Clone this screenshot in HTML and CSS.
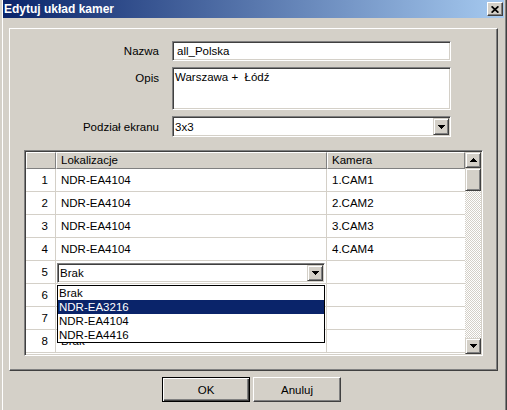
FILE: index.html
```html
<!DOCTYPE html>
<html lang="pl">
<head>
<meta charset="utf-8">
<title>Edytuj układ kamer</title>
<link rel="stylesheet" href="styles.css">
</head>
<body>
<div class="window">
  <div class="titlebar">
    <span class="title">Edytuj układ kamer</span>
    <div class="close-btn">
      <svg width="8" height="7" viewBox="0 0 8 7"><path d="M0.6 0.3 L7.4 6.7 M7.4 0.3 L0.6 6.7" stroke="#000" stroke-width="1.7" fill="none"/></svg>
    </div>
  </div>

  <div class="panel">
    <div class="form">
      <div class="lbl">Nazwa</div>
      <div class="field">all_Polska</div>
      <div class="lbl lbl-top">Opis</div>
      <div class="field area">Warszawa +  Łódź</div>
      <div class="lbl">Podział ekranu</div>
      <div class="field select">
        <span>3x3</span>
        <span class="drop-btn"><svg width="7" height="4" viewBox="0 0 7 4"><path d="M0 0h7v1h-1v1h-1v1h-1v1h-1v-1h-1v-1h-1v-1h-1z" fill="#000"/></svg></span>
      </div>
    </div>

    <div class="grid-frame">
      <div class="grid">
        <div class="hd"></div>
        <div class="hd">Lokalizacje</div>
        <div class="hd hd-last">Kamera</div>

        <div class="c num">1</div><div class="c">NDR-EA4104</div><div class="c last">1.CAM1</div>
        <div class="c num">2</div><div class="c">NDR-EA4104</div><div class="c last">2.CAM2</div>
        <div class="c num">3</div><div class="c">NDR-EA4104</div><div class="c last">3.CAM3</div>
        <div class="c num">4</div><div class="c">NDR-EA4104</div><div class="c last">4.CAM4</div>
        <div class="c num">5</div>
        <div class="c edit">
          <div class="combo">
            <div class="field select cell-select">
              <span>Brak</span>
              <span class="drop-btn small"><svg width="7" height="4" viewBox="0 0 7 4"><path d="M0 0h7v1h-1v1h-1v1h-1v1h-1v-1h-1v-1h-1v-1h-1z" fill="#000"/></svg></span>
            </div>
            <div class="dd-list">
              <div class="dd-item">Brak</div>
              <div class="dd-item sel">NDR-EA3216</div>
              <div class="dd-item">NDR-EA4104</div>
              <div class="dd-item">NDR-EA4416</div>
            </div>
          </div>
        </div>
        <div class="c last"></div>
        <div class="c num">6</div><div class="c"></div><div class="c last"></div>
        <div class="c num">7</div><div class="c"></div><div class="c last"></div>
        <div class="c num">8</div><div class="c">Brak</div><div class="c last"></div>
      </div>
      <div class="vscroll">
        <div class="sb-btn"><svg width="7" height="4" viewBox="0 0 7 4"><path d="M0 4h7v-1h-1v-1h-1v-1h-1v-1h-1v1h-1v1h-1v1h-1z" fill="#000"/></svg></div>
        <div class="sb-btn sb-thumb"></div>
        <div class="sb-track"></div>
        <div class="sb-btn"><svg width="7" height="4" viewBox="0 0 7 4"><path d="M0 0h7v1h-1v1h-1v1h-1v1h-1v-1h-1v-1h-1v-1h-1z" fill="#000"/></svg></div>
      </div>
    </div>
  </div>

  <div class="buttons">
    <div class="btn default">OK</div>
    <div class="btn">Anuluj</div>
  </div>
</div>
</body>
</html>
```

FILE: styles.css
```css
* { box-sizing: border-box; }

body {
  margin: 0;
  padding-left: 2px;
  width: 507px;
  height: 410px;
  overflow: hidden;
  background: #d4d0c8;
  font: 11.5px "Liberation Sans", Arial, sans-serif;
  color: #000;
}

.window {
  height: 410px;
  border-left: 1px solid #fff;
  border-right: 1px solid #404040;
  box-shadow: inset -1px 0 #808080;
  padding-right: 2px;
}

.titlebar {
  height: 18px;
  background: linear-gradient(to right, #0a246a, #a6caf0);
  display: flex;
  align-items: center;
  justify-content: space-between;
  padding: 0 1px;
}

.title {
  color: #fff;
  font-weight: bold;
  font-size: 12px;
  line-height: 18px;
}

.close-btn {
  width: 16px;
  height: 14px;
  background: #d4d0c8;
  border: 1px solid;
  border-color: #fff #404040 #404040 #fff;
  box-shadow: inset -1px -1px #808080;
  display: flex;
  align-items: center;
  justify-content: center;
}
.close-btn svg { display: block; }

.panel {
  margin: 10px 6px 0 6px;
  border: 1px solid;
  border-color: #fff #404040 #404040 #fff;
  box-shadow: inset -1px -1px #808080;
  padding: 12px 14px 14px 14px;
}

.form {
  display: grid;
  grid-template-columns: 135px 279px;
  column-gap: 13px;
  row-gap: 6px;
}

.lbl {
  text-align: right;
  align-self: center;
  line-height: 14px;
  white-space: nowrap;
}
.lbl-top { align-self: start; padding-top: 4px; }

.field {
  height: 20px;
  background: #fff;
  border: 1px solid;
  border-color: #808080 #fff #fff #808080;
  box-shadow: inset 1px 1px #404040, inset -1px -1px #d4d0c8;
  padding: 0 4px;
  display: flex;
  align-items: center;
  line-height: 14px;
  white-space: pre;
}

.area {
  height: 43px;
  align-items: flex-start;
  padding: 2px 2px;
}

.select {
  height: 21px;
  padding: 0 1px 0 2px;
  justify-content: space-between;
}

.drop-btn {
  width: 16px;
  height: 17px;
  background: #d4d0c8;
  border: 1px solid;
  border-color: #d4d0c8 #404040 #404040 #d4d0c8;
  box-shadow: inset 1px 1px #fff, inset -1px -1px #808080;
  display: flex;
  align-items: center;
  justify-content: center;
}
.drop-btn svg, .sb-btn svg { display: block; }
.drop-btn.small { height: 16px; }

.grid-frame {
  margin-top: 13px;
  height: 206px;
  border: 1px solid;
  border-color: #808080 #fff #fff #808080;
  box-shadow: inset 1px 1px #404040, inset -1px -1px #d4d0c8;
  padding: 1px;
  display: flex;
  background: #fff;
}

.grid {
  flex: 1;
  display: grid;
  grid-template-columns: 30px 271px 1fr;
  grid-template-rows: 17px repeat(8, 23px);
  align-content: start;
  background: #fff;
}

.hd {
  background: #d4d0c8;
  border: 1px solid;
  border-color: #fff #808080 #808080 #fff;
  padding-left: 4px;
  line-height: 15px;
  white-space: nowrap;
}

.c {
  border-right: 1px solid #d4d0c8;
  border-bottom: 1px solid #d4d0c8;
  display: flex;
  align-items: center;
  padding-left: 5px;
  white-space: nowrap;
}
.c.last { border-right: none; }
.num { justify-content: flex-end; padding-right: 7px; padding-left: 0; }

.c.edit {
  align-items: flex-start;
  padding: 2px 0 0 1px;
}

.combo {
  position: relative;
  width: 268px;
}

.cell-select { height: 20px; }

.dd-list {
  position: absolute;
  top: 22px;
  left: 0;
  width: 100%;
  border: 1px solid #000;
  background: #fff;
  z-index: 2;
}

.dd-item {
  height: 14px;
  line-height: 14px;
  padding-left: 1px;
}
.dd-item.sel { background: #0a246a; color: #fff; }

.vscroll {
  width: 16px;
  display: flex;
  flex-direction: column;
}

.sb-btn {
  height: 16px;
  flex: none;
  background: #d4d0c8;
  border: 1px solid;
  border-color: #d4d0c8 #404040 #404040 #d4d0c8;
  box-shadow: inset 1px 1px #fff, inset -1px -1px #808080;
  display: flex;
  align-items: center;
  justify-content: center;
}
.sb-thumb { height: 23px; }

.sb-track {
  flex: 1;
  background: repeating-conic-gradient(#fff 0 25%, #d4d0c8 0 50%) 0 0 / 2px 2px;
}

.buttons {
  display: flex;
  justify-content: center;
  gap: 3px;
  margin-top: 6px;
  padding-right: 4px;
}

.btn {
  width: 88px;
  height: 25px;
  background: #d4d0c8;
  border: 1px solid;
  border-color: #fff #404040 #404040 #fff;
  box-shadow: inset -1px -1px #808080;
  display: flex;
  align-items: center;
  justify-content: center;
}
.btn.default {
  border-color: #000;
  box-shadow: inset 1px 1px #fff, inset -1px -1px #404040, inset -2px -2px #808080;
}
```
